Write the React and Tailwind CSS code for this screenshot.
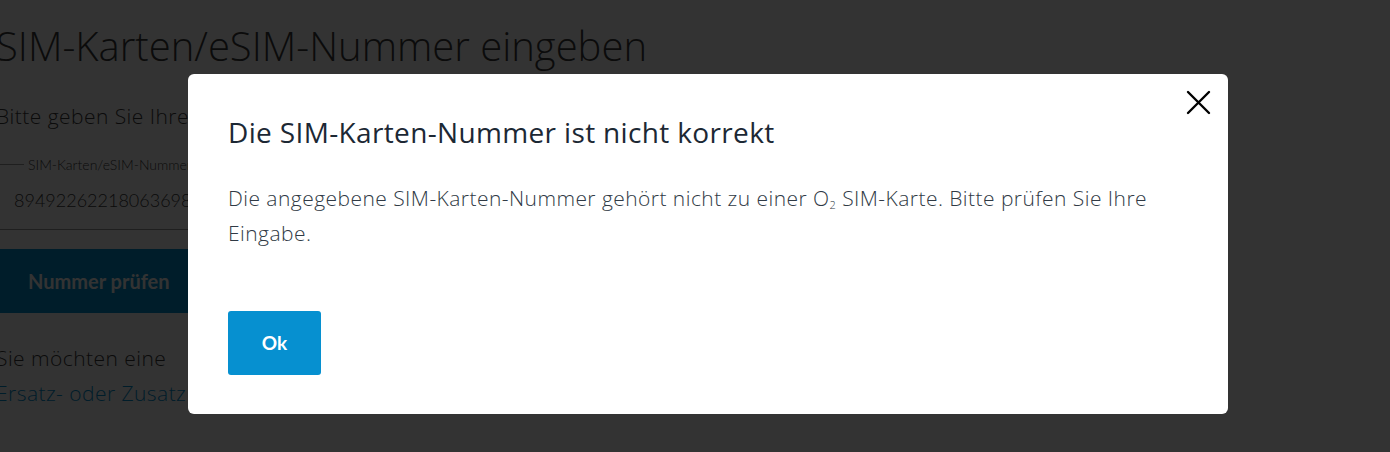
import React from 'react';

const font = { fontFamily: 'Lato, "Open Sans", "Liberation Sans", sans-serif' };
const modalFont = { fontFamily: '"Open Sans", Lato, "Liberation Sans", sans-serif' };

const App = () => {
  return (
    <div className="relative h-[452px] w-[1390px] overflow-hidden bg-white" style={font}>
      {/* Page behind the dialog */}
      <div className="ml-[-4px] pt-[22px]">
        <h1 className="text-[40px] font-light leading-[48px] text-[#3a3a3a]" style={modalFont}>
          SIM-Karten/eSIM-Nummer eingeben
        </h1>
        <p className="mt-[32px] text-[21px] font-light leading-[28px] tracking-[0.45px] text-[#3a3a3a]" style={modalFont}>
          Bitte geben Sie Ihre SIM-Karten/eSIM-Nummer ein.
        </p>

        {/* Input field */}
        <div className="mt-[24px] w-[420px] border-b border-[#9a9a9a] pb-[17px]">
          <div className="flex items-center">
            <span className="h-px w-[28px] bg-[#9a9a9a]" />
            <span className="px-[4px] text-[14px] font-light text-[#3a3a3a]">
              SIM-Karten/eSIM-Nummer
            </span>
          </div>
          <div className="mt-[13px] pl-[18px] text-[18px] font-light leading-[24px] text-[#3a3a3a]">
            8949226221806369864
          </div>
        </div>

        <button className="mt-[19px] flex h-[64px] w-[260px] items-center pl-[32px] text-[20px] font-bold text-white bg-[#0090d0]">
          Nummer prüfen
        </button>

        <p className="mt-[28px] text-[21px] font-light leading-[35px] tracking-[0.45px] text-[#3a3a3a]" style={modalFont}>
          Sie möchten eine
        </p>
        <a className="block text-[21px] font-light leading-[35px] tracking-[0.45px] text-[#0090d0]" style={modalFont}>
          Ersatz- oder Zusatzkarte bestellen?
        </a>
      </div>

      {/* Overlay */}
      <div className="absolute inset-0 bg-black/80">
        <div className="relative ml-[188px] mt-[74px] w-[1040px] rounded-[6px] bg-white px-[40px] pt-[40px] pb-[39px]" style={modalFont}>
          <button className="absolute right-[17px] top-[15px] flex h-[26px] w-[26px] items-center justify-center text-black">
            <svg width="25" height="25" viewBox="0 0 25 25" fill="none" stroke="currentColor" strokeWidth="2.4" strokeLinecap="round">
              <path d="M2 2 L23 23 M23 2 L2 23" />
            </svg>
          </button>

          <h2 className="text-[28px] font-normal leading-[36px] tracking-[0.35px] text-[#1c2834]">
            Die SIM-Karten-Nummer ist nicht korrekt
          </h2>
          <p className="mt-[31px] max-w-[940px] text-[21px] font-light leading-[35px] tracking-[0.45px] text-[#303a45]">
            Die angegebene SIM-Karten-Nummer gehört nicht zu einer O<sub className="text-[11px]">2</sub> SIM-Karte. Bitte prüfen Sie Ihre Eingabe.
          </p>

          <button className="mt-[60px] flex h-[64px] w-[93px] items-center justify-center rounded-[3px] bg-[#0690d0] text-[19px] font-bold text-white" style={font}>
            Ok
          </button>
        </div>
      </div>
    </div>
  );
};

export default App;
